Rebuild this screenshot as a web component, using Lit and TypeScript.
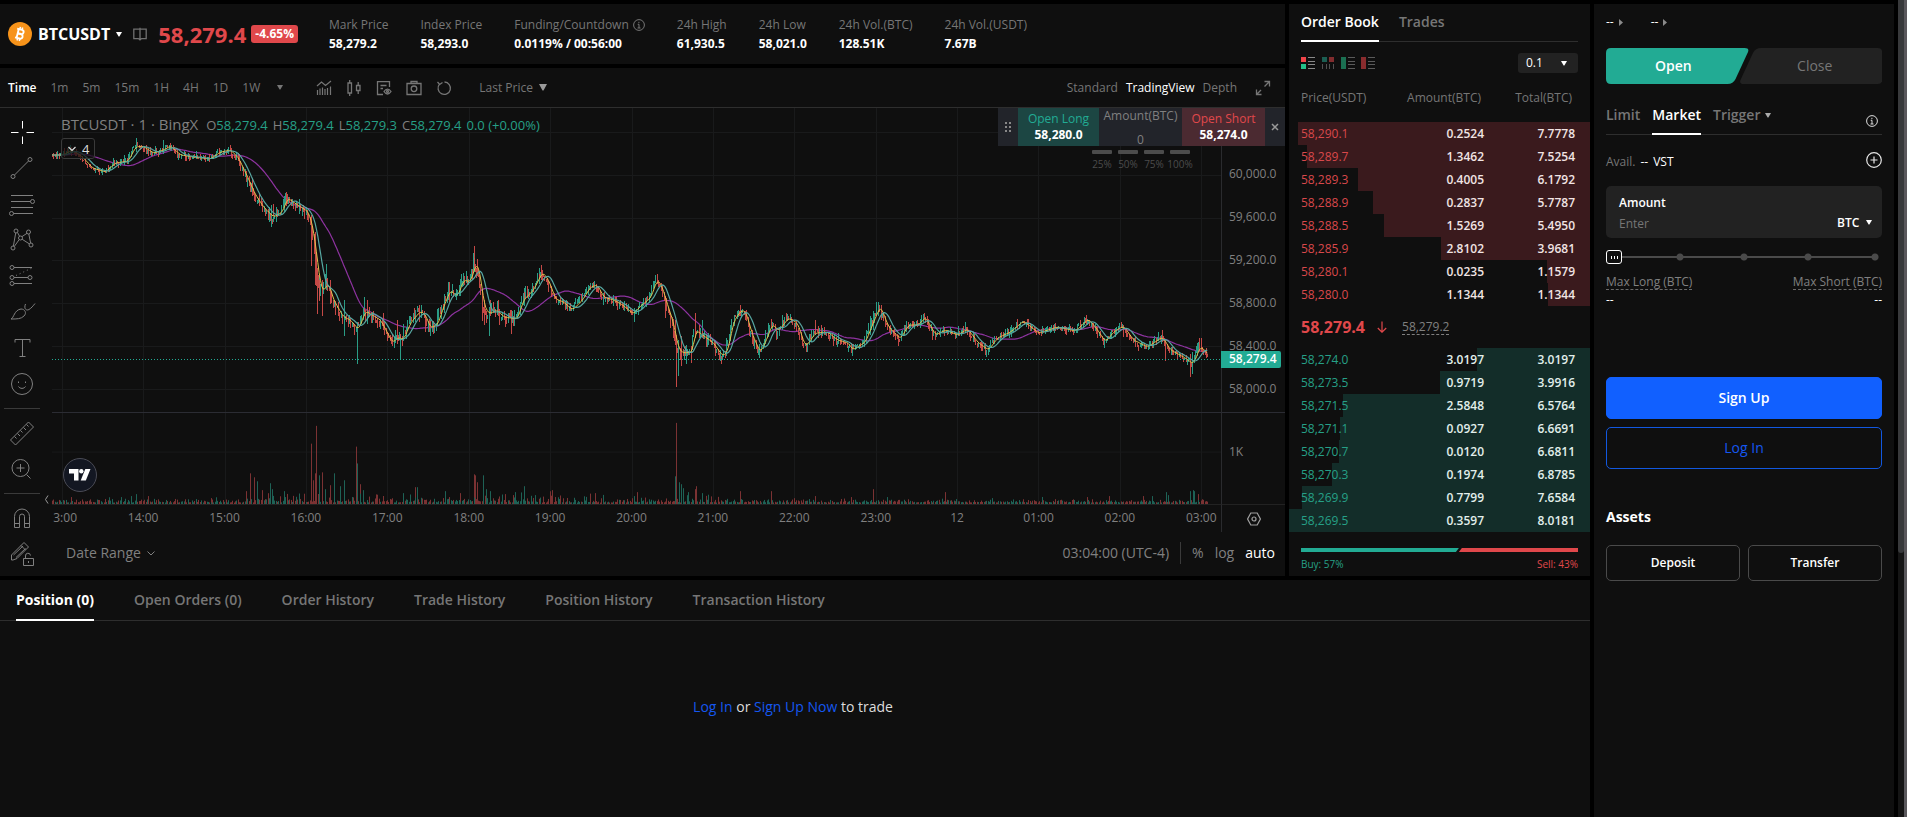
import { LitElement, html, svg, css, nothing } from "lit";
import { customElement, property, state } from "lit/decorators.js";
import { classMap } from "lit/directives/class-map.js";
import { styleMap } from "lit/directives/style-map.js";

const shared = css`
  * { box-sizing: border-box; }
  :host { font-family: "Open Sans", "Noto Sans", sans-serif; font-size: 12px; line-height: 16px; color: #fff; }
  button, input, select {
    font: inherit; color: inherit; background: none; border: 0; margin: 0; padding: 0; outline: none;
  }
  button, select { cursor: pointer; }
  select { appearance: none; }
  a { color: #1557f0; text-decoration: none; }
  svg { display: block; flex: none; }
  .caret { width: 6px; height: 5px; fill: currentColor; }
`;

const caret = html`<svg class="caret" viewBox="0 0 6 5" aria-hidden="true"><path d="M0 0h6L3.4 4.6h-.8z" /></svg>`;
const info = html`<svg width="12" height="12" viewBox="0 0 12 12" fill="none" stroke="currentColor">
  <circle cx="6" cy="6" r="5.4" /><path d="M4.7 5.3H6V9M4.5 9h3M5.9 2.8v1.3" /></svg>`;

/* ---------- Market header ---------- */

const STATS: [string, string, boolean?][] = [
  ["Mark Price", "58,279.2"],
  ["Index Price", "58,293.0"],
  ["Funding/Countdown", "0.0119% / 00:56:00", true],
  ["24h High", "61,930.5"],
  ["24h Low", "58,021.0"],
  ["24h Vol.(BTC)", "128.51K"],
  ["24h Vol.(USDT)", "7.67B"],
];

@customElement("market-header")
class MarketHeader extends LitElement {
  static styles = [shared, css`
    :host { display: flex; align-items: center; height: 60px; padding: 0 8px; background: #0f0f0f; }
    .pair { display: flex; align-items: center; gap: 6px; font-size: 16px; font-weight: 700; line-height: 24px; }
    .book { margin-left: 11px; color: #707070; }
    .price { margin-left: 11px; font-size: 22px; font-weight: 700; line-height: 28px; color: #e0484b; }
    .change { margin-left: 5px; height: 18px; padding: 0 4px; border-radius: 3px; background: #e0484b; font-weight: 700; line-height: 18px; }
    .stats { display: flex; gap: 32px; margin: 0 0 0 31px; }
    .stat { margin: 0; }
    dt { display: flex; align-items: center; gap: 4px; color: #767676; line-height: 20px; white-space: nowrap; }
    dd { margin: 0; font-weight: 700; line-height: 18px; white-space: nowrap; }
  `];
  render() {
    return html`
      <button class="pair">
        <svg width="24" height="24" viewBox="0 0 24 24"><circle cx="12" cy="12" r="12" fill="#f7931a" />
          <g transform="rotate(14 12 12)" fill="none" stroke="#fff">
            <path stroke-width="1.9" d="M9.6 7.4v9.2M8 7.5h4.9a2.1 2.1 0 0 1 0 4.3H9.8M9.8 12h3.6a2.3 2.3 0 0 1 0 4.5H8" />
            <path stroke-width="1.5" d="M10.7 5v2.4M13 5v2.4M10.7 16.6V19M13 16.6V19" /></g></svg>
        <span>BTCUSDT</span>${caret}
      </button>
      <button class="book" aria-label="Contract guide">
        <svg width="14" height="14" viewBox="0 0 14 14" fill="none" stroke="currentColor" stroke-width="1.3"><path d="M7 2.2H.8v9.4h4.6L7 12.9l1.600-1.300h4.600V2.200H7zM7 .8v12" /></svg>
      </button>
      <span class="price">58,279.4</span><span class="change">-4.65%</span>
      <div class="stats">
        ${STATS.map(([k, v, i]) => html`<dl class="stat"><dt>${k}${i ? info : nothing}</dt><dd>${v}</dd></dl>`)}
      </div>`;
  }
}

/* ---------- Chart data ---------- */

const LEFT = 52, PLOT_W = 1169, PRICE_H = 304, VOL_H = 92, TOP = 108;
const STEP = 81.36 / 60;

const CURVE = [
  52,155, 62,155, 72,150, 82,157, 92,168, 105,172, 115,163, 128,161, 135,147, 142,146, 153,153, 163,150, 170,146, 180,155,
  193,157, 210,159, 220,152, 230,150, 238,158, 247,177, 255,195, 263,207, 273,217, 282,212, 287,198, 297,205, 308,212,
  313,230, 317,262, 320,285, 323,292, 328,282, 333,300, 343,317, 350,320, 358,330, 365,311, 380,320, 387,333, 392,343,
  398,337, 403,340, 410,323, 420,311, 425,315, 430,328, 437,325, 443,307, 450,290, 457,297, 463,280, 470,282, 476,262,
  480,275, 483,303, 488,314, 497,310, 503,317, 517,319, 523,300, 533,290, 542,272, 548,280, 555,299, 563,302, 572,310,
  582,300, 590,287, 597,285, 603,297, 613,300, 622,305, 633,314, 640,306, 650,298, 657,279, 662,288, 667,305, 673,323,
  678,349, 683,353, 692,352, 695,330, 702,335, 713,343, 722,356, 727,352, 733,322, 740,311, 745,311, 752,335, 760,353,
  767,337, 772,324, 778,331, 788,318, 797,323, 805,347, 815,333, 827,332, 837,340, 848,343, 852,350, 865,342, 873,322,
  880,306, 888,327, 900,339, 908,325, 918,325, 925,317, 935,335, 945,330, 957,335, 967,329, 978,343, 988,350, 997,338,
  1010,332, 1023,321, 1038,333, 1057,327, 1075,331, 1088,319, 1097,330, 1105,342, 1113,332, 1123,326, 1133,340,
  1147,347, 1162,337, 1170,350, 1183,357, 1193,364, 1200,346, 1208,355,
];
/* x, top, bottom, 1 = rising */
const WICKS: [number, number, number, 0 | 1][] = [
  [136,138,152,1], [163,140,152,1], [252,178,196,0], [271,205,227,1], [273,204,216,0], [284,196,212,1], [286,192,206,0],
  [311,215,266,0], [315,232,285,0], [317,268,314,0], [319,276,300,1], [322,280,316,0], [326,264,290,1], [330,280,304,0],
  [344,300,336,1], [357,322,364,1], [364,297,316,1], [367,300,316,0], [397,320,344,0], [400,335,359,1], [430,320,336,1],
  [448,287,300,1], [461,274,286,1], [473,253,272,1], [474,246,268,0], [477,259,276,0], [482,290,321,0], [484,300,325,0],
  [489,310,336,1], [497,301,312,1], [511,310,334,0], [524,288,306,1], [539,268,284,1], [541,265,280,0], [590,283,290,1],
  [634,308,322,1], [657,274,284,0], [665,296,318,0], [675,320,345,0], [676,336,387,0], [678,340,376,1], [681,336,366,0],
  [686,345,364,1], [691,348,363,0], [695,313,338,0], [702,320,338,1], [720,350,361,1], [740,305,316,0], [759,344,358,1],
  [782,315,326,1], [815,320,334,0], [870,316,332,1], [873,311,330,1], [878,302,316,1], [881,305,316,0], [923,314,322,1],
  [1010,327,334,1], [1086,315,324,0], [1104,338,348,1], [1162,330,342,0], [1165,342,361,0], [1190,354,377,0],
  [1192,352,374,1], [1197,343,356,1], [1199,338,350,0], [1201,338,352,0],
];
const VOLUMES: [number, number, 0 | 1][] = [
  [71,7,0], [121,7,1], [131,8,1], [136,10,1], [148,8,0], [211,6,0], [246,13,0], [250,31,0], [254,27,0], [257,23,1],
  [262,14,0], [270,21,1], [272,15,1], [284,13,1], [311,61,0], [313,24,0], [315,31,0], [316,79,0], [319,29,1], [322,32,0],
  [325,15,1], [330,19,0], [334,31,1], [340,18,1], [344,24,1], [356,58,0], [357,41,1], [360,20,0], [363,14,1], [403,11,1],
  [415,17,0], [417,17,1], [445,13,1], [460,11,0], [474,30,0], [475,29,0], [477,22,0], [483,29,1], [486,15,1], [490,13,1],
  [505,10,0], [515,12,1], [524,18,1], [535,9,1], [552,14,0], [595,11,0], [637,12,0], [675,28,1], [676,82,0], [679,22,1],
  [681,20,1], [683,16,1], [688,12,1], [695,15,0], [696,18,0], [702,11,1], [740,13,0], [771,13,0], [815,8,0], [851,7,0],
  [873,15,0], [887,7,1], [945,12,0], [992,6,1], [1087,7,0], [1109,8,0], [1143,8,0], [1152,8,1], [1166,12,1], [1168,9,1],
  [1190,13,1], [1193,14,1], [1194,13,1], [1198,10,0],
];

function random(seed: number) {
  return () => {
    seed = (seed * 1664525 + 1013904223) >>> 0;
    return seed / 4294967296;
  };
}
function curveAt(x: number) {
  let i = 0;
  while (i < CURVE.length - 4 && CURVE[i + 2] < x) i += 2;
  const t = Math.min(1, Math.max(0, (x - CURVE[i]) / (CURVE[i + 2] - CURVE[i])));
  return CURVE[i + 1] + (CURVE[i + 3] - CURVE[i + 1]) * t;
}
function spread(x: number) {
  if (x < 235) return 2.4;
  if (x < 310) return 4;
  if (x < 530) return 5;
  if (x < 670) return 3.2;
  if (x < 900) return 3.8;
  return 2.8;
}
function buildSeries() {
  const rnd = random(20240912);
  const up: string[] = [], down: string[] = [], volUp: string[] = [], volDown: string[] = [];
  const mids: number[] = [];
  let prev = curveAt(LEFT);
  for (let x = LEFT; x < 1208; x += STEP) {
    const s = spread(x);
    const close = curveAt(x + 2) + (rnd() - 0.5) * s * 1.7;
    const high = Math.min(prev, close) - rnd() * rnd() * s * 2 - 0.5;
    const low = Math.max(prev, close) + rnd() * rnd() * s * 2 + 0.5;
    const px = Math.round(x) - LEFT + 0.5;
    (close < prev ? up : down).push(`M${px} ${(high - TOP).toFixed(1)}V${(low - TOP).toFixed(1)}`);
    const busy = x > 240 && x < 720 ? 1.8 : 0.8;
    const vh = 1.5 + rnd() * rnd() * 5 * busy + (rnd() > 0.92 ? 3 * busy : 0);
    (close < prev ? volUp : volDown).push(`M${px} ${VOL_H}V${(VOL_H - vh).toFixed(1)}`);
    mids.push(curveAt(x));
    prev = close;
  }
  for (const [x, a, b, rising] of WICKS) (rising ? up : down).push(`M${x - LEFT + 0.5} ${a - TOP}V${b - TOP}`);
  for (const [x, h, rising] of VOLUMES) (rising ? volUp : volDown).push(`M${x - LEFT + 0.5} ${VOL_H}V${VOL_H - h}`);
  const average = (n: number, ahead: number) =>
    mids.map((_, i) => {
      let sum = 0;
      for (let k = 0; k < n; k++) sum += mids[Math.min(mids.length - 1, Math.max(0, i + ahead - k))];
      return `${i ? "L" : "M"}${(i * STEP).toFixed(1)} ${(sum / n - TOP).toFixed(1)}`;
    }).join("");
  return {
    up: up.join(""), down: down.join(""), volUp: volUp.join(""), volDown: volDown.join(""),
    fast: average(4, 1), mid: average(8, 0), slow: average(34, 0),
  };
}
const SERIES = buildSeries();
const HOURS = ["13:00", "14:00", "15:00", "16:00", "17:00", "18:00", "19:00", "20:00", "21:00", "22:00", "23:00", "12", "01:00", "02:00", "03:00"];
const LEVELS = ["60,000.0", "59,600.0", "59,200.0", "58,800.0", "58,400.0", "58,000.0"];
const V_GRID = HOURS.map((_, i) => Math.round(10 + i * 81.36) + 0.5);

/* ---------- Drawing tool icons ---------- */

const TOOLS: [string, unknown][] = [
  ["Cross", svg`<path stroke="#fff" d="M14.500 3v7.500M14.500 18.500V26M3 14.500h7.500M18.500 14.500H26" />`],
  ["Trend line", svg`<circle cx="5" cy="22.500" r="2" /><circle cx="22" cy="5.500" r="2" /><path d="M6.500 21L20.500 7" />`],
  ["Fibonacci", svg`<path d="M3 5.500h22M3 11.500h19.500M3 17.500h22M5.500 23.500H25" /><circle cx="24.500" cy="11.500" r="2" /><circle cx="3.500" cy="23.500" r="2" />`],
  ["Patterns", svg`<circle cx="8" cy="5" r="2" /><circle cx="20.500" cy="6" r="2" /><circle cx="12.500" cy="12" r="2" /><circle cx="5" cy="22" r="2" /><circle cx="23" cy="19" r="2" /><path d="M7.700 7L5.400 20M9.500 6.500l2 3.700M14 10.600l5-3.300M20.800 8l1.800 9M14.200 13.300l7.200 4.600M11.200 13.600L6.300 20.400" />`],
  ["Forecast", svg`<circle cx="4" cy="5.500" r="2" /><circle cx="4" cy="15.500" r="2" /><circle cx="22" cy="15.500" r="2" /><circle cx="4" cy="21.500" r="2" /><path d="M6 5.500h18M6 15.500h14M6 21.500h18" /><path stroke-dasharray="1 3" d="M8 13.500L24 6" />`],
  ["Brush", svg`<path d="M3 21c3-1 3-9 10-10 4 0 6 4 3 7-3 3-7 3-13 3zM17.500 6c-2 5 1 7 3.500 5.500S25 8 27 5.500" />`],
  ["Text", svg`<path d="M7 8.500V5.500h15v3M14.500 5.500v17M11.500 22.500h6" />`],
  ["Icons", svg`<circle cx="14" cy="14" r="10.500" /><path d="M10.500 16.500c1.500 2.500 5.500 2.500 7 0M10.500 11.500v1.500M17.500 11.500v1.500" />`],
];
const TOOLS_B: [string, unknown][] = [
  ["Measure", svg`<path d="M2.500 21L20.500 3l5 5L7.500 26zM6.500 17.500l2 2M9.500 14.500l2.500 2.500M12.500 11.500l2 2M15.500 8.500l2.500 2.500M18.500 5.500l2 2" />`],
  ["Zoom in", svg`<circle cx="12.500" cy="13" r="8.500" /><path d="M8.500 13h8M12.500 9v8M18.500 19.500l4 4" />`],
];
const TOOLS_C: [string, unknown][] = [
  ["Magnet", svg`<path d="M6.500 23.500v-11a7.500 7.500 0 0 1 15 0v11h-5v-11a2.500 2.500 0 0 0-5 0v11zM6.500 19.500h5M16.500 19.500h5" />`],
  ["Lock drawings", svg`<path d="M3.500 20v-5L16 2.500l4.500 4.500L9 18.500l-4 1.500zM13 5.500l4.500 4.500M5.500 15L15 6M8 17.500l9.500-9" /><path d="M15.500 18.500h10v7h-10zM17.500 18.500v-2.500a2.500 2.500 0 0 1 5-.500M20.500 21v2" />`],
];

/* ---------- Chart panel ---------- */

@customElement("chart-panel")
class ChartPanel extends LitElement {
  static styles = [shared, css`
    :host { display: block; background: #0f0f0f; color: #808080; }
    .bar { display: flex; align-items: center; height: 40px; padding: 0 14px 0 8px; border-bottom: 1px solid #2e2e2e; }
    .spans { display: flex; gap: 14px; }
    .bar button { color: #767676; }
    .bar .on { color: #fff; font-weight: 600; }
    .more { display: flex; margin: 0 32px 0 17px; }
    .icons { display: flex; gap: 12px; }
    .last { display: flex; align-items: center; gap: 6px; margin-left: 26px; }
    .views { display: flex; align-items: center; gap: 8px; margin-left: auto; }
    .views .on { font-weight: 500; }
    .expand { margin-left: 10px; }
    .body { display: flex; }
    .tools { display: flex; flex-direction: column; align-items: center; width: 44px; padding: 6px 0 4px; }
    .tool { display: flex; align-items: center; justify-content: center; width: 36px; height: 36px; }
    .rule { width: 36px; height: 1px; margin: 6px 0; background: #3a3a3a; }
    .side { display: flex; flex-direction: column; justify-content: flex-end; width: 8px; padding-bottom: 72px; }
    .main { flex: 1; min-width: 0; }
    .grid { display: grid; grid-template-columns: minmax(0, 1fr) 64px; }
    .pane { position: relative; overflow: hidden; }
    .plot { width: 100%; height: 100%; }
    .axis { border-left: 1px solid #2a2b2e; position: relative; }
    .h-price { height: 304px; }
    .h-vol { height: 92px; border-top: 1px solid #2b2c33; }
    .h-time { height: 28px; border-top: 1px solid #222; }
    .levels { list-style: none; margin: 0; padding: 44px 0 0 7px; }
    .levels li { height: 43px; line-height: 43px; }
    .tag { position: absolute; left: -1px; right: 4px; top: 243px; height: 17px; padding-left: 8px; border-radius: 0 2px 2px 0; background: #22ab94; color: #fff; font-weight: 600; line-height: 16px; }
    .one-k { padding: 31px 0 0 7px; }
    .legend { position: absolute; left: 9px; top: 6px; display: flex; align-items: baseline; gap: 5px; font-size: 13px; line-height: 20px; white-space: nowrap; }
    .title { margin-right: 3px; font-size: 15px; }
    .legend b { font-weight: 400; color: #26a087; }
    .fold { position: absolute; left: 9px; top: 30px; display: flex; align-items: center; gap: 6px; height: 21px; padding: 0 5px 0 6px; border: 1px solid #3a3a3a; border-radius: 3px; background: rgba(15, 15, 15, .75); color: #ddd; font-size: 13px; }
    .logo { position: absolute; left: 11px; top: 45px; width: 34px; height: 34px; display: flex; align-items: center; justify-content: center; border: 1px solid #4a4b55; border-radius: 50%; background: #131722; }
    .hours { display: grid; grid-template-columns: repeat(15, 1fr); margin: 0 -21px 0 -31px; text-align: center; line-height: 26px; }
    .gear { display: flex; align-items: center; justify-content: center; width: 100%; height: 100%; color: #a0a0a0; }
    .foot { display: flex; align-items: center; height: 42px; padding: 0 10px 0 14px; font-size: 14px; line-height: 20px; }
    .foot .right { display: flex; align-items: center; gap: 11px; margin-left: auto; }
    .foot button { display: flex; align-items: center; gap: 6px; }
    .foot .auto { color: #fff; }
    .split { width: 1px; height: 22px; background: #3a3a3a; }
    .stage { position: relative; }
    .quick { position: absolute; right: 0; top: 0; width: 287px; }
    .deal { display: grid; grid-template-columns: 20px 81px 83px 83px 20px; height: 38px; background: #22242a; }
    .deal > * { display: flex; flex-direction: column; align-items: center; justify-content: center; }
    .long { background: #1c4643; color: #22ab94; }
    .short { background: #4b2a31; color: #e0484b; }
    .long b, .short b { color: #fff; font-weight: 700; }
    .qty input { width: 60px; height: 22px; text-align: center; padding-top: 8px; }
    .steps { display: flex; gap: 6px; padding: 4px 0 0 94px; font-size: 10px; color: #4c4c4c; }
    .steps button { display: flex; flex-direction: column; align-items: center; width: 20px; line-height: 20px; }
    .steps button::before { content: ""; width: 20px; height: 4px; border-radius: 1px; background: #4c4c4c; }
  `];
  @state() private span = "Time";
  private tool([name, shape]: [string, unknown]) {
    return html`<button class="tool" aria-label=${name}><svg width="28" height="28" viewBox="0 0 28 28" fill="none" stroke="#808080">${shape}</svg></button>`;
  }
  render() {
    return html`
      <div class="bar">
        <div class="spans">
          ${["Time", "1m", "5m", "15m", "1H", "4H", "1D", "1W"].map((s) => html`<button class=${classMap({ on: s === this.span })} @click=${() => (this.span = s)}>${s}</button>`)}
        </div>
        <button class="more" aria-label="More intervals">${caret}</button>
        <div class="icons">
          <button aria-label="Indicators"><svg width="18" height="18" viewBox="0 0 18 18" fill="none" stroke="currentColor"><path stroke-width="1.200" d="M2 7l4.500-4 4 3.500L16 2M2.500 11v5M5 9.500V16M7.500 8.500V16M10 10v6M12.500 9v7M15.500 7.500V16" /></svg></button>
          <button aria-label="Candles"><svg width="18" height="18" viewBox="0 0 18 18" fill="none" stroke="currentColor" stroke-width="1.300"><path d="M3 4h3.500v10H3zM4.700 1v3M4.700 14v3M11.500 6.500H15v5h-3.500zM13.200 3v3.500M13.200 11.500V15" /></svg></button>
          <button aria-label="Settings"><svg width="18" height="18" viewBox="0 0 18 18" fill="none" stroke="currentColor" stroke-width="1.300"><path d="M14.500 8V2.700h-12v12.800H8M5.500 6.500h6M5.500 9.500h2.500" /><path d="M9 12.500c2-3.300 5-3.300 7 0-2 3.300-5 3.300-7 0z" /><circle cx="12.500" cy="12.500" r="1" /></svg></button>
          <button aria-label="Screenshot"><svg width="18" height="18" viewBox="0 0 18 18" fill="none" stroke="currentColor" stroke-width="1.300"><path d="M2 4.500h14v11H2zM6 4.500V2.500h6v2" /><circle cx="9" cy="9.800" r="2.800" /></svg></button>
          <button aria-label="Reset"><svg width="18" height="18" viewBox="0 0 18 18" fill="none" stroke="currentColor" stroke-width="1.300"><path d="M4.500 5.200a6.200 6.200 0 1 0 5-2.200M2.500 3l2.200 2.500L7.500 3.500" /></svg></button>
        </div>
        <button class="last">Last Price<svg width="8" height="7" viewBox="0 0 8 7" fill="#9a9a9a"><path d="M0 0h8L4.500 6.500h-1z" /></svg></button>
        <div class="views">
          <button>Standard</button><button class="on">TradingView</button><button>Depth</button>
          <button class="expand" aria-label="Full screen"><svg width="16" height="16" viewBox="0 0 16 16" fill="none" stroke="currentColor" stroke-width="1.300"><path d="M9.500 1.500h5v5M14.500 1.500l-5 5M6.500 14.500h-5v-5M1.500 14.500l4.500-4.500" /></svg></button>
        </div>
      </div>
      <div class="body">
        <div class="tools">
          ${TOOLS.map((t) => this.tool(t))}<span class="rule"></span>
          ${TOOLS_B.map((t) => this.tool(t))}<span class="rule"></span>
          ${TOOLS_C.map((t) => this.tool(t))}
        </div>
        <div class="side"><svg width="5" height="9" viewBox="0 0 5 9" fill="none" stroke="#999"><path d="M4 .5L1.500 4.500 4 8.500" /></svg></div>
        <div class="main stage">
          <div class="grid">
            <div class="pane h-price">
              <svg class="plot" viewBox="0 0 ${PLOT_W} ${PRICE_H}" preserveAspectRatio="none" fill="none" role="img" aria-label="BTCUSDT price">
                <g stroke="#191a1b" shape-rendering="crispEdges">
                  ${V_GRID.map((x) => svg`<path d="M${x} 0V${PRICE_H}" />`)}
                  ${[24, 67, 110, 152, 195, 238, 281].map((y) => svg`<path d="M0 ${y + 0.5}H${PLOT_W}" />`)}
                </g>
                <path d=${SERIES.slow} stroke="#8e33a0" stroke-width="1.200" />
                <path d=${SERIES.up} stroke="#2a9d86" shape-rendering="crispEdges" />
                <path d=${SERIES.down} stroke="#d9504c" shape-rendering="crispEdges" stroke-opacity=".9" />
                <path d=${SERIES.fast} stroke="#e2c24c" stroke-width="1" />
                <path d=${SERIES.mid} stroke="#57a8a2" stroke-width="1.200" />
                <path d="M0 251.500H${PLOT_W}" stroke="#22ab94" stroke-dasharray="1 2" shape-rendering="crispEdges" />
              </svg>
              <div class="legend">
                <span class="title">BTCUSDT · 1 · BingX</span>
                <span>O<b>58,279.4</b></span><span>H<b>58,279.4</b></span><span>L<b>58,279.3</b></span><span>C<b>58,279.4</b></span><b>0.0 (+0.00%)</b>
              </div>
              <button class="fold"><svg width="8" height="6" viewBox="0 0 8 6" fill="none" stroke="currentColor" stroke-width="1.200"><path d="M.5 1L4 4.500 7.500 1" /></svg>4</button>
            </div>
            <div class="axis h-price">
              <ul class="levels">${LEVELS.map((l) => html`<li>${l}</li>`)}</ul>
              <span class="tag">58,279.4</span>
            </div>
            <div class="pane h-vol">
              <svg class="plot" viewBox="0 0 ${PLOT_W} ${VOL_H}" preserveAspectRatio="none" fill="none" shape-rendering="crispEdges" role="img" aria-label="BTCUSDT volume">
                <g stroke="#191a1b">${V_GRID.map((x) => svg`<path d="M${x} 0V${VOL_H}" />`)}<path d="M0 39.500H${PLOT_W}" /></g>
                <path d=${SERIES.volDown} stroke="#7c3233" /><path d=${SERIES.volUp} stroke="#1e6357" />
              </svg>
              <a class="logo" href="#tradingview" aria-label="TradingView">
                <svg width="22" height="12" viewBox="0 0 22 12" fill="#fff"><path d="M0 0h9.500v11.500H5V4.500H0z" /><circle cx="12.300" cy="2.200" r="2.200" /><path d="M16.300 0h5.200l-4.700 11.500h-5.100z" /></svg>
              </a>
            </div>
            <div class="axis h-vol"><div class="one-k">1K</div></div>
            <div class="pane h-time"><div class="hours">${HOURS.map((h) => html`<span>${h}</span>`)}</div></div>
            <div class="axis h-time"><button class="gear" aria-label="Axis settings"><svg width="14" height="14" viewBox="0 0 14 14" fill="none" stroke="currentColor" stroke-width="1.200"><path d="M3.800 1h6.400L13.400 7l-3.200 6H3.800L.6 7z" /><circle cx="7" cy="7" r="2" /></svg></button></div>
          </div>
          <div class="foot">
            <button>Date Range<svg width="8" height="5" viewBox="0 0 8 5" fill="none" stroke="currentColor"><path d="M.5.5L4 4 7.500.5" /></svg></button>
            <div class="right"><button>03:04:00 (UTC-4)</button><span class="split"></span><button>%</button><button>log</button><button class="auto">auto</button></div>
          </div>
          <div class="quick">
            <div class="deal">
              <span><svg width="6" height="10" viewBox="0 0 6 10" fill="#888"><path d="M0 0h2v2H0zM4 0h2v2H4zM0 4h2v2H0zM4 4h2v2H4zM0 8h2v2H0zM4 8h2v2H4z" /></svg></span>
              <button class="long">Open Long<b>58,280.0</b></button>
              <label class="qty">Amount(BTC)<input type="text" value="0" /></label>
              <button class="short">Open Short<b>58,274.0</b></button>
              <button aria-label="Close"><svg width="8" height="8" viewBox="0 0 8 8" fill="none" stroke="#999" stroke-width="1.500"><path d="M1 1l6 6M7 1L1 7" /></svg></button>
            </div>
            <div class="steps">${["25%", "50%", "75%", "100%"].map((p) => html`<button>${p}</button>`)}</div>
          </div>
        </div>
      </div>`;
  }
}

/* ---------- Order book ---------- */

type Row = [string, string, string, number];
const ASKS: Row[] = [
  ["58,290.1", "0.2524", "7.7778", 97], ["58,289.7", "1.3462", "7.5254", 94], ["58,289.3", "0.4005", "6.1792", 77],
  ["58,288.9", "0.2837", "5.7787", 72], ["58,288.5", "1.5269", "5.4950", 68.6], ["58,285.9", "2.8102", "3.9681", 49.6],
  ["58,280.1", "0.0235", "1.1579", 14.4], ["58,280.0", "1.1344", "1.1344", 14],
];
const BIDS: Row[] = [
  ["58,274.0", "3.0197", "3.0197", 37.7], ["58,273.5", "0.9719", "3.9916", 49.8], ["58,271.5", "2.5848", "6.5764", 82],
  ["58,271.1", "0.0927", "6.6691", 83.2], ["58,270.7", "0.0120", "6.6811", 83.4], ["58,270.3", "0.1974", "6.8785", 85.8],
  ["58,269.9", "0.7799", "7.6584", 95.6], ["58,269.5", "0.3597", "8.0181", 100],
];

@customElement("order-book")
class OrderBook extends LitElement {
  static styles = [shared, css`
    :host { display: block; background: #0f0f0f; }
    .tabs { display: flex; gap: 20px; margin: 0 12px; height: 38px; border-bottom: 1px solid #2e2e2e; font-size: 14px; color: #767676; }
    .tabs button { height: 38px; font-weight: 600; border-bottom: 2px solid transparent; }
    .tabs .on { color: #fff; border-color: #fff; }
    .modes { display: flex; align-items: center; margin: 11px 12px 0; gap: 6px; }
    .dim { opacity: .55; }
    .step { position: relative; margin-left: auto; color: #fff; }
    .step select { width: 60px; height: 20px; padding-left: 8px; border-radius: 3px; background: #222; font-size: 12px; }
    .step svg { position: absolute; right: 11px; top: 8px; pointer-events: none; }
    table { width: 100%; border-collapse: collapse; table-layout: fixed; }
    th { height: 49px; padding: 0 3px 0 0; font-weight: 400; color: #767676; text-align: right; }
    td { height: 23px; padding: 0; text-align: right; font-weight: 600; }
    th:first-child, td:first-child { width: 92px; padding-left: 12px; text-align: left; }
    td:last-child { width: 106px; padding-right: 15px; }
    th:last-child { width: 106px; padding-right: 18px; }
    td:first-child { font-weight: 400; }
    .asks tbody tr { background: linear-gradient(to left, #3a1a1d var(--depth), transparent var(--depth)); color: #f1e4e4; }
    .asks td:first-child { color: #d9484b; }
    .bids tr { background: linear-gradient(to left, #132d29 var(--depth), transparent var(--depth)); color: #e2efec; }
    .bids td:first-child { color: #26a087; }
    .mid { display: flex; align-items: center; height: 42px; padding: 0 12px; }
    .mid strong { font-size: 16px; color: #e0484b; }
    .mid svg { margin: 0 15px 0 12px; }
    .mark { color: #808080; border-bottom: 1px dashed #808080; line-height: 14px; }
    .ratio { display: flex; margin: 16px 12px 0; height: 4px; }
    .buy { background: #22ab94; clip-path: polygon(0 0, 100% 0, calc(100% - 3px) 100%, 0 100%); }
    .sell { flex: 1; background: #e0484b; clip-path: polygon(3px 0, 100% 0, 100% 100%, 0 100%); }
    .sums { display: flex; justify-content: space-between; padding: 4px 12px; font-size: 10px; line-height: 16px; }
    .sums span:first-child { color: #26a087; }
    .sums span:last-child { color: #e0484b; }
  `];
  @state() private tab = "Order Book";
  private rows(rows: Row[]) {
    return rows.map(([p, a, t, d]) => html`<tr style=${styleMap({ "--depth": `${d}%` })}><td>${p}</td><td>${a}</td><td>${t}</td></tr>`);
  }
  render() {
    return html`
      <div class="tabs">${["Order Book", "Trades"].map((t) => html`<button class=${classMap({ on: t === this.tab })} @click=${() => (this.tab = t)}>${t}</button>`)}</div>
      <div class="modes">
        <button aria-label="Both sides"><svg width="14" height="12" viewBox="0 0 14 12"><path fill="#f04448" d="M0 0h5v5H0z" /><path fill="#25c08a" d="M0 7h5v5H0z" /><path stroke="#888" d="M7 .5h7M7 4.500h7M7 7.500h7M7 11.500h7" /></svg></button>
        <button aria-label="Side by side"><svg class="dim" width="14" height="12" viewBox="0 0 14 12"><path fill="#25a08a" d="M1 0h5v5H1z" /><path fill="#e04448" d="M8 0h5v5H8z" /><path stroke="#888" d="M1.500 7v5M5.500 7v5M8.500 7v5M12.500 7v5" /></svg></button>
        <button aria-label="Bids only"><svg class="dim" width="14" height="12" viewBox="0 0 14 12"><path fill="#25c08a" d="M0 0h5v12H0z" /><path stroke="#999" d="M7 .5h7M7 4.500h7M7 7.500h7M7 11.500h7" /></svg></button>
        <button aria-label="Asks only"><svg class="dim" width="14" height="12" viewBox="0 0 14 12"><path fill="#f04448" d="M0 0h5v12H0z" /><path stroke="#999" d="M7 .5h7M7 4.500h7M7 7.500h7M7 11.500h7" /></svg></button>
        <div class="step"><select aria-label="Price step"><option>0.1</option><option>1</option><option>10</option></select>${caret}</div>
      </div>
      <table class="asks">
        <thead><tr><th scope="col">Price(USDT)</th><th scope="col">Amount(BTC)</th><th scope="col">Total(BTC)</th></tr></thead>
        <tbody>${this.rows(ASKS)}</tbody>
      </table>
      <div class="mid"><strong>58,279.4</strong>
        <svg width="10" height="12" viewBox="0 0 10 12" fill="none" stroke="#e0484b" stroke-width="1.200"><path d="M5 .5v10.500M.8 7L5 11.200 9.200 7" /></svg>
        <span class="mark">58,279.2</span></div>
      <table class="bids" aria-label="Bids"><tbody>${this.rows(BIDS)}</tbody></table>
      <div class="ratio"><span class="buy" style=${styleMap({ width: "57%" })}></span><span class="sell"></span></div>
      <div class="sums"><span>Buy: 57%</span><span>Sell: 43%</span></div>`;
  }
}

/* ---------- Trade form ---------- */

@customElement("trade-form")
class TradeForm extends LitElement {
  static styles = [shared, css`
    :host { display: block; padding: 0 12px; background: #0f0f0f; }
    .modes { display: flex; gap: 28px; height: 36px; align-items: center; }
    .modes button { display: flex; align-items: center; gap: 5px; }
    .sides { display: flex; margin-top: 8px; }
    .sides button { position: relative; flex: 1; height: 36px; font-size: 14px; font-weight: 500; }
    .sides svg { position: absolute; left: 0; top: 0; width: 100%; height: 100%; }
    .sides span { position: relative; }
    .sides .open { padding-right: 8px; margin-right: -5px; font-weight: 600; }
    .close { padding-left: 8px; margin-left: -4px; color: #767676; }
    .types { display: flex; gap: 12px; align-items: center; height: 51px; border-bottom: 1px solid #2e2e2e; font-size: 14px; font-weight: 600; color: #767676; }
    .types button { display: flex; align-items: center; gap: 5px; height: 51px; padding-top: 14px; border-bottom: 2px solid transparent; }
    .types .on { color: #fff; border-color: #fff; }
    .types .caret { color: #aaa; }
    .types .tip { margin-left: auto; padding: 24px 4px 0 0; color: #ddd; }
    .avail { display: flex; align-items: center; gap: 5px; height: 53px; color: #767676; }
    .avail b { font-weight: 400; color: #fff; }
    .avail button { margin-left: auto; padding-bottom: 4px; color: #e6e6e6; }
    .field { display: grid; grid-template-columns: 1fr auto; align-items: center; margin-top: -2px; padding: 7px 10px 4px 13px; height: 52px; border-radius: 5px; background: #222; }
    .field label { grid-column: 1 / -1; font-weight: 600; line-height: 20px; }
    .field input { width: 100%; height: 20px; }
    .field input::placeholder { color: #767676; opacity: 1; }
    .unit { position: relative; }
    .unit select { width: 27px; height: 18px; padding-bottom: 4px; font-weight: 600; margin-right: 8px; }
    .unit svg { position: absolute; right: 0; top: 5px; pointer-events: none; }
    .slider { display: block; appearance: none; width: 100%; height: 14px; margin: 12px 0 11px; background:
      radial-gradient(circle at center, #4a4a4a 3px, transparent 4px) 26% 50% / 8px 8px no-repeat,
      radial-gradient(circle at center, #4a4a4a 3px, transparent 4px) 50% 50% / 8px 8px no-repeat,
      radial-gradient(circle at center, #4a4a4a 3px, transparent 4px) 74% 50% / 8px 8px no-repeat,
      radial-gradient(circle at center, #4a4a4a 3px, transparent 4px) 99% 50% / 8px 8px no-repeat,
      linear-gradient(#4a4a4a, #4a4a4a) 0 50% / 98% 2px no-repeat; }
    .slider::-webkit-slider-thumb { appearance: none; width: 16px; height: 14px; border: 1px solid #fff; border-radius: 3px; background:
      linear-gradient(#fff, #fff) 4px 50% / 1px 3px no-repeat, linear-gradient(#fff, #fff) 7px 50% / 1px 3px no-repeat,
      linear-gradient(#fff, #fff) 10px 50% / 1px 3px no-repeat, #0f0f0f; }
    .max { display: flex; justify-content: space-between; color: #808080; }
    .max span { border-bottom: 1px dashed #6a6a6a; line-height: 14px; }
    .vals { display: flex; justify-content: space-between; margin-top: 2px; }
    .auth { display: grid; gap: 8px; margin-top: 69px; }
    .auth button { height: 42px; border-radius: 5px; font-size: 14px; font-weight: 500; border: 1px solid #1258e0; color: #1557f0; }
    .auth .fill { background: #1160ff; border-color: #1160ff; color: #fff; font-weight: 600; }
    h2 { margin: 38px 0 18px; font-size: 14px; line-height: 20px; font-weight: 700; }
    .move { display: grid; grid-template-columns: 1fr 1fr; gap: 8px; }
    .move button { height: 36px; border: 1px solid #4a4a4a; border-radius: 5px; font-weight: 600; }
  `];
  @property() unit = "BTC";
  render() {
    const tri = html`<svg width="4" height="7" viewBox="0 0 4 7" fill="#8a8a8a"><path d="M0 0l4 3.500L0 7z" /></svg>`;
    return html`
      <div class="modes"><button aria-label="Margin mode">--${tri}</button><button aria-label="Leverage">--${tri}</button></div>
      <div class="sides">
        <button class="open"><svg viewBox="0 0 143 36" preserveAspectRatio="none" fill="#22ab94"><path d="M5 0h134q5 0 3.500 4L130 31q-2.500 5-8 5H5q-5 0-5-5V5q0-5 5-5z" /></svg><span>Open</span></button>
        <button class="close"><svg viewBox="0 0 143 36" preserveAspectRatio="none" fill="#222"><path d="M21 0h117q5 0 5 5v26q0 5-5 5H4q-5 0-3.500-4L13 5q2.500-5 8-5z" /></svg><span>Close</span></button>
      </div>
      <div class="types"><button>Limit</button><button class="on">Market</button><button>Trigger${caret}</button><span class="tip">${info}</span></div>
      <div class="avail">Avail.<b>--</b><b>VST</b>
        <button aria-label="Add funds"><svg width="16" height="16" viewBox="0 0 16 16" fill="none" stroke="currentColor" stroke-width="1.200"><circle cx="8" cy="8" r="7.300" /><path d="M4.500 8h7M8 4.500v7" /></svg></button></div>
      <div class="field">
        <label for="amount">Amount</label>
        <input id="amount" type="text" placeholder="Enter" />
        <div class="unit"><select aria-label="Unit"><option>${this.unit}</option><option>USDT</option></select>${caret}</div>
      </div>
      <input class="slider" type="range" min="0" max="100" value="0" aria-label="Amount percent" />
      <div class="max"><span>Max Long (BTC)</span><span>Max Short (BTC)</span></div>
      <div class="vals"><span>--</span><span>--</span></div>
      <div class="auth"><button class="fill">Sign Up</button><button>Log In</button></div>
      <h2>Assets</h2>
      <div class="move"><button>Deposit</button><button>Transfer</button></div>`;
  }
}

/* ---------- Positions ---------- */

@customElement("position-panel")
class PositionPanel extends LitElement {
  static styles = [shared, css`
    :host { display: block; background: #0f0f0f; }
    .tabs { display: flex; gap: 40px; height: 41px; padding: 0 16px; border-bottom: 1px solid #2e2e2e; }
    .tabs button { height: 41px; font-size: 14px; font-weight: 600; color: #767676; border-bottom: 2px solid transparent; }
    .tabs .on { color: #fff; border-color: #fff; font-weight: 700; }
    p { margin: 0; padding: 76px 4px 20px 0; text-align: center; font-size: 14px; line-height: 20px; font-weight: 500; color: #ddd; }
  `];
  @state() private tab = 0;
  render() {
    const tabs = ["Position (0)", "Open Orders (0)", "Order History", "Trade History", "Position History", "Transaction History"];
    return html`
      <div class="tabs">${tabs.map((t, i) => html`<button class=${classMap({ on: i === this.tab })} @click=${() => (this.tab = i)}>${t}</button>`)}</div>
      <p><a href="#login">Log In</a> or <a href="#signup">Sign Up Now</a> to trade</p>`;
  }
}

/* ---------- Page ---------- */

@customElement("app-root")
class AppRoot extends LitElement {
  static styles = [shared, css`
    :host { display: flex; min-height: 100vh; background: #000; padding-top: 4px; }
    .page { flex: 1; min-width: 0; display: grid; gap: 4px;
      grid-template: "head book form" auto "chart book form" auto "pos pos form" 1fr / minmax(0, 1fr) 301px 300px; }
    market-header { grid-area: head; }
    chart-panel { grid-area: chart; }
    order-book { grid-area: book; }
    trade-form { grid-area: form; }
    position-panel { grid-area: pos; }
    .scroll { display: flex; margin: -4px 0 0 4px; background: #151515; }
    .inner { width: 6px; height: 553px; background: #38393b; border-radius: 0 0 3px 3px; }
    .outer { width: 3px; background: #5a585c; }
  `];
  render() {
    return html`
      <div class="page">
        <market-header></market-header>
        <chart-panel></chart-panel>
        <order-book></order-book>
        <trade-form></trade-form>
        <position-panel></position-panel>
      </div>
      <div class="scroll"><div class="inner"></div><div class="outer"></div></div>`;
  }
}
